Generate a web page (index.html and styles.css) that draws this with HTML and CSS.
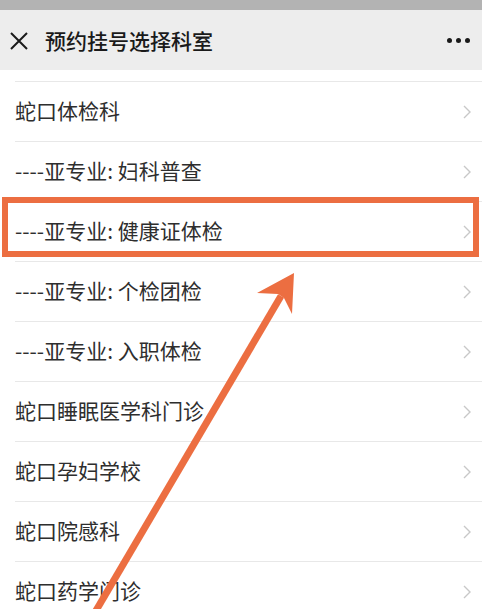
FILE: index.html
```html
<!DOCTYPE html>
<html lang="zh">
<head>
<meta charset="utf-8">
<link rel="stylesheet" href="styles.css">
</head>
<body>
<div class="screen">
  <div class="status"></div>
  <div class="nav">
    <svg class="close" width="18" height="18" viewBox="0 0 18 18"><path d="M1 1 L17 17 M17 1 L1 17" stroke="#1a1a1a" stroke-width="2" fill="none"/></svg>
    <div class="title">预约挂号选择科室</div>
    <div class="more"><span></span><span></span><span></span></div>
  </div>
  <div class="gap"></div>
  <ul class="list">
    <li><span class="label">蛇口体检科</span><svg class="chev" width="8" height="14" viewBox="0 0 8 14"><path d="M1 1 L7 7 L1 13" stroke="#c8c8c8" stroke-width="1.4" fill="none"/></svg></li>
    <li><span class="label">----亚专业: 妇科普查</span><svg class="chev" width="8" height="14" viewBox="0 0 8 14"><path d="M1 1 L7 7 L1 13" stroke="#c8c8c8" stroke-width="1.4" fill="none"/></svg></li>
    <li><span class="label">----亚专业: 健康证体检</span><svg class="chev" width="8" height="14" viewBox="0 0 8 14"><path d="M1 1 L7 7 L1 13" stroke="#c8c8c8" stroke-width="1.4" fill="none"/></svg></li>
    <li><span class="label">----亚专业: 个检团检</span><svg class="chev" width="8" height="14" viewBox="0 0 8 14"><path d="M1 1 L7 7 L1 13" stroke="#c8c8c8" stroke-width="1.4" fill="none"/></svg></li>
    <li><span class="label">----亚专业: 入职体检</span><svg class="chev" width="8" height="14" viewBox="0 0 8 14"><path d="M1 1 L7 7 L1 13" stroke="#c8c8c8" stroke-width="1.4" fill="none"/></svg></li>
    <li><span class="label">蛇口睡眠医学科门诊</span><svg class="chev" width="8" height="14" viewBox="0 0 8 14"><path d="M1 1 L7 7 L1 13" stroke="#c8c8c8" stroke-width="1.4" fill="none"/></svg></li>
    <li><span class="label">蛇口孕妇学校</span><svg class="chev" width="8" height="14" viewBox="0 0 8 14"><path d="M1 1 L7 7 L1 13" stroke="#c8c8c8" stroke-width="1.4" fill="none"/></svg></li>
    <li><span class="label">蛇口院感科</span><svg class="chev" width="8" height="14" viewBox="0 0 8 14"><path d="M1 1 L7 7 L1 13" stroke="#c8c8c8" stroke-width="1.4" fill="none"/></svg></li>
    <li><span class="label">蛇口药学门诊</span><svg class="chev" width="8" height="14" viewBox="0 0 8 14"><path d="M1 1 L7 7 L1 13" stroke="#c8c8c8" stroke-width="1.4" fill="none"/></svg></li>
  </ul>
  <div class="highlight"></div>
  <svg class="arrow" width="482" height="609" viewBox="0 0 482 609">
    <line x1="94" y1="614" x2="281" y2="296" stroke="#ec6e41" stroke-width="7"/>
    <polygon points="294,273 257,293 278,294 284,298 292,314" fill="#ec6e41"/>
  </svg>
</div>
</body>
</html>
```

FILE: styles.css
```css
html, body {
  margin: 0;
  padding: 0;
  background: #ffffff;
}
.screen {
  position: relative;
  width: 482px;
  height: 609px;
  overflow: hidden;
  background: #ffffff;
  font-family: "Noto Sans CJK SC", "Noto Sans", sans-serif;
}
.status {
  height: 10px;
  background: #b3b3b3;
}
.nav {
  height: 60px;
  background: #ededed;
  display: flex;
  align-items: center;
  padding: 0 12px 0 10px;
  box-sizing: border-box;
}
.close {
  flex: none;
  margin-top: 1px;
}
.title {
  margin-left: 17px;
  font-size: 21px;
  font-weight: 500;
  color: #1a1a1a;
  flex: 1;
}
.more {
  display: flex;
  gap: 4px;
}
.more span {
  width: 5px;
  height: 5px;
  border-radius: 50%;
  background: #1a1a1a;
}
.gap {
  height: 11px;
}
.list {
  list-style: none;
  margin: 0;
  padding: 0 0 0 15px;
}
.list li {
  height: 60px;
  border-top: 1px solid #e8e8e8;
  box-sizing: border-box;
  display: flex;
  align-items: center;
  justify-content: space-between;
  padding-right: 11px;
}
.label {
  font-size: 21px;
  color: #2e2e2e;
  line-height: 1;
  margin-top: -2px;
}
.chev {
  flex: none;
}
.highlight {
  position: absolute;
  left: 2px;
  top: 197px;
  width: 477px;
  height: 60px;
  border: 6px solid #ec6e41;
  box-sizing: border-box;
}
.arrow {
  position: absolute;
  left: 0;
  top: 0;
}
```
